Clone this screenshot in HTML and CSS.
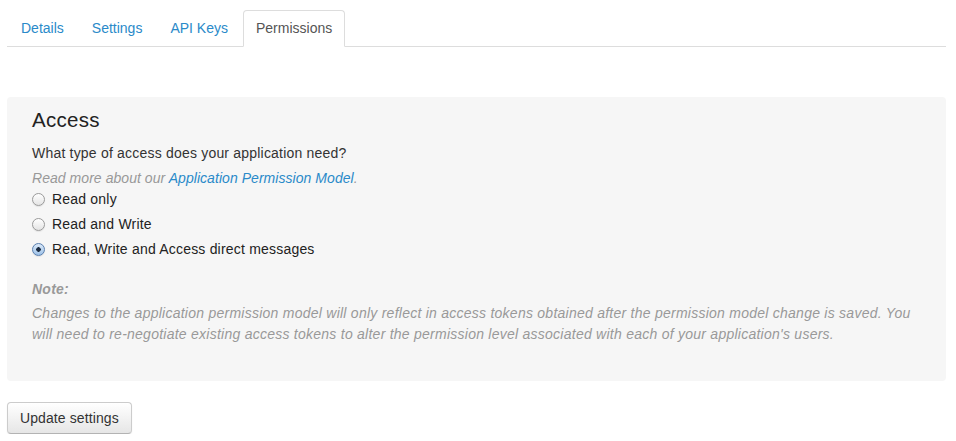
FILE: index.html
```html
<!DOCTYPE html>
<html>
<head>
<meta charset="utf-8">
<link rel="stylesheet" href="styles.css">
</head>
<body>
<div class="page">
  <ul class="tabs">
    <li class="tab"><a href="#">Details</a></li>
    <li class="tab"><a href="#">Settings</a></li>
    <li class="tab"><a href="#">API Keys</a></li>
    <li class="tab active"><a href="#">Permissions</a></li>
  </ul>
  <div class="well">
    <h3 class="title">Access</h3>
    <p class="question">What type of access does your application need?</p>
    <p class="hint">Read more about our <a href="#">Application Permission Model</a>.</p>
    <div class="options">
      <label class="option"><input type="radio" name="access"> Read only</label>
      <label class="option"><input type="radio" name="access"> Read and Write</label>
      <label class="option"><input type="radio" name="access" checked> Read, Write and Access direct messages</label>
    </div>
    <div class="note">
      <div class="note-title">Note:</div>
      <p class="note-text">Changes to the application permission model will only reflect in access tokens obtained after the permission model change is saved. You will need to re-negotiate existing access tokens to alter the permission level associated with each of your application's users.</p>
    </div>
  </div>
  <button class="btn">Update settings</button>
</div>
</body>
</html>
```
FILE: styles.css
```css
* { box-sizing: border-box; }
html, body { margin: 0; padding: 0; background: #fff; }
body {
  font-family: "Liberation Sans", Arial, Helvetica, sans-serif;
  font-size: 14px;
  line-height: 20px;
  color: #333;
  letter-spacing: 0.2px;
}
.page {
  width: 939px;
  margin-left: 7px;
  padding-top: 10px;
}
.tabs {
  list-style: none;
  margin: 0;
  padding: 0 0 0 1px;
  display: flex;
  border-bottom: 1px solid #ddd;
  letter-spacing: 0;
}
.tab {
  margin-right: 2px;
  margin-bottom: -1px;
}
.tab a {
  display: block;
  padding: 8px 12px;
  line-height: 19px;
  border: 1px solid transparent;
  border-radius: 4px 4px 0 0;
  color: #2a8ac9;
  text-decoration: none;
}
.tab.active a {
  color: #555;
  background: #fff;
  border-color: #ddd #ddd transparent;
}
.well {
  margin-top: 50px;
  background: #f6f6f6;
  border-radius: 4px;
  padding: 11px 25px 36px;
}
.title {
  margin: 0 0 11px;
  font-size: 20.5px;
  line-height: 24px;
  font-weight: normal;
  color: #222;
  letter-spacing: 0.3px;
}
.question { margin: 0 0 5px; }
.hint {
  margin: 0 0 1px;
  font-style: italic;
  color: #999;
  letter-spacing: 0.05px;
}
.hint a { color: #2a8ac9; text-decoration: none; }
.options { display: flex; flex-direction: column; gap: 5px; }
.option {
  display: flex;
  align-items: center;
  gap: 7px;
  color: #222;
}
.option input {
  appearance: none;
  -webkit-appearance: none;
  margin: 0;
  width: 13px;
  height: 13px;
  border-radius: 50%;
  border: 1px solid #9a9a9a;
  background: linear-gradient(#fff, #e4e4e4);
  box-shadow: 0 1px 1px rgba(0,0,0,0.08);
}
.option input:checked {
  border-color: #5a7fae;
  background: radial-gradient(circle at 50% 50%, #1b2b40 0, #1b2b40 2px, transparent 2.5px), linear-gradient(#dbe9f8, #9dc1e8);
}
.note { margin-top: 20px; color: #999; font-style: italic; letter-spacing: 0.25px; }
.note-title { font-weight: bold; line-height: 20px; }
.note-text { margin: 4px 0 0; line-height: 21px; }
.btn {
  margin-top: 21px;
  font-family: inherit;
  font-size: 14px;
  line-height: 20px;
  letter-spacing: 0.1px;
  color: #333;
  padding: 5px 12px 5px;
  border: 1px solid #ccc;
  border-bottom-color: #b3b3b3;
  border-radius: 4px;
  background: linear-gradient(#fff, #e6e6e6);
  box-shadow: inset 0 1px 0 rgba(255,255,255,.2), 0 1px 2px rgba(0,0,0,.05);
}
```
